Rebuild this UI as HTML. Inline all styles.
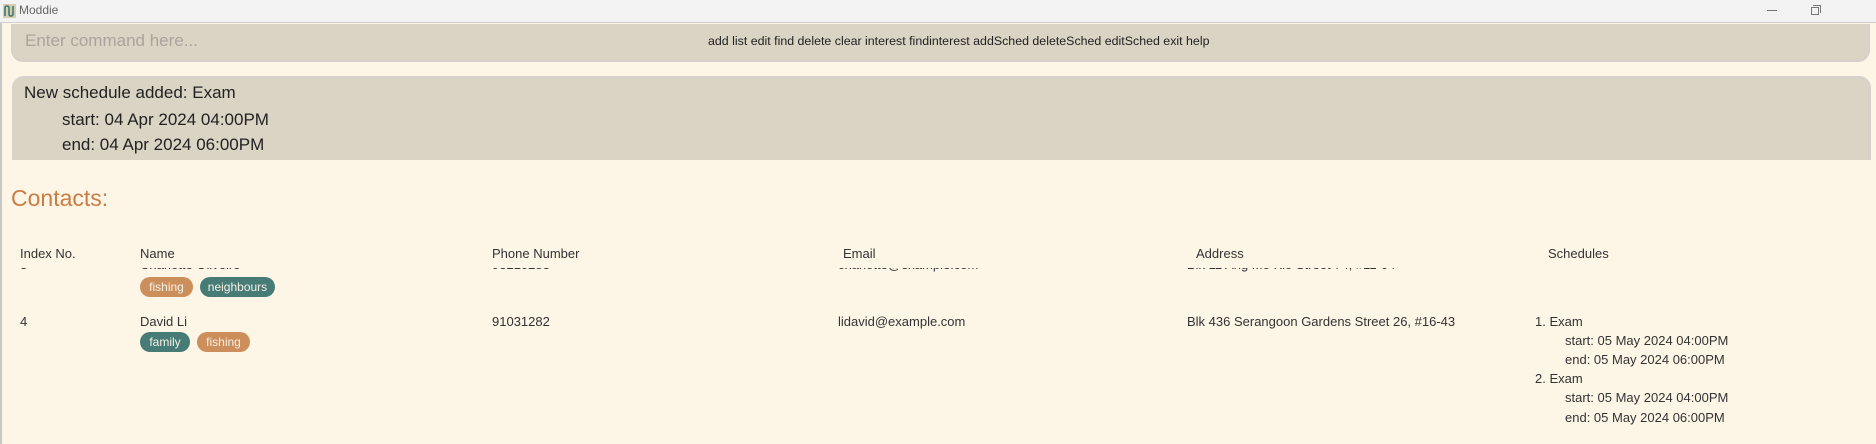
<!DOCTYPE html>
<html><head><meta charset="utf-8"><style>
*{margin:0;padding:0;box-sizing:border-box}
body{width:1876px;height:444px;overflow:hidden;background:#fdf6e6;font-family:"Liberation Sans",sans-serif;color:#333;position:relative}
.a{position:absolute;white-space:nowrap}
.tb{position:absolute;left:0;top:0;width:1876px;height:23px;background:#f3f3f3;border-bottom:1px solid #cfcfcf}
.tag{position:absolute;height:20px;border-radius:10px;color:#f5f0e6;font-size:12px;line-height:20px;text-align:center}
.o{background:#cc8f5c}.t{background:#477c76}
.f{font-size:13px;line-height:16px}
</style></head><body>
<div style="position:absolute;left:0;top:23px;width:2px;height:421px;background:#c8c8c8"></div>
<div class="tb"></div>
<div class="a" style="left:3px;top:4px;width:13px;height:14px;background:#d9ccb0"></div>
<svg class="a" style="left:3px;top:4px" width="13" height="14"><path d="M2 12V4Q2 2 4 2Q6 2 6 4V10Q6 12 8 12Q10 12 10 10V2" stroke="#3b7c74" stroke-width="1.6" fill="none"/></svg>
<div class="a" style="left:19px;top:3px;font-size:12px;color:#666">Moddie</div>
<div class="a" style="left:1767px;top:10px;width:10px;height:1px;background:#777"></div>
<div class="a" style="left:1811px;top:7px;width:8px;height:8px;border:1px solid #777"></div>
<div class="a" style="left:1813px;top:5px;width:8px;height:8px;border-top:1px solid #777;border-right:1px solid #777"></div>
<div class="a" style="left:11px;top:24px;width:1859px;height:38px;background:#dad4c4;border-radius:0 0 12px 12px;border:2px solid #d6d2cb;border-top:none"></div>
<div class="a" style="left:25px;top:31px;font-size:17px;color:#a9a59c">Enter command here...</div>
<div class="a" style="left:708px;top:34px;font-size:12.4px;color:#222">add list edit find delete clear interest findinterest addSched deleteSched editSched exit help</div>
<div class="a" style="left:12px;top:76px;width:1859px;height:84px;background:#dad4c4;border-radius:12px 12px 0 0;border-top:2px solid #d6d2cb;border-right:3px solid #d6d2cb"></div>
<div class="a" style="left:24px;top:83px;font-size:17px;color:#222">New schedule added: Exam</div>
<div class="a" style="left:62px;top:110px;font-size:17px;color:#222">start: 04 Apr 2024 04:00PM</div>
<div class="a" style="left:62px;top:135px;font-size:17px;color:#222">end: 04 Apr 2024 06:00PM</div>
<div class="a" style="left:11px;top:185px;font-size:23px;color:#c97d45">Contacts:</div>
<div class="a f" style="left:20px;top:246px">Index No.</div>
<div class="a f" style="left:140px;top:246px">Name</div>
<div class="a f" style="left:492px;top:246px">Phone Number</div>
<div class="a f" style="left:843px;top:246px">Email</div>
<div class="a f" style="left:1196px;top:246px">Address</div>
<div class="a f" style="left:1548px;top:246px">Schedules</div>
<div style="position:absolute;left:0;top:268px;width:1876px;height:6px;overflow:hidden">
<div class="a f" style="left:20px;top:-11px">3</div>
<div class="a f" style="left:140px;top:-11px">Charlotte Oliveiro</div>
<div class="a f" style="left:492px;top:-11px">93210283</div>
<div class="a f" style="left:838px;top:-11px">charlotte@example.com</div>
<div class="a f" style="left:1187px;top:-11px">Blk 11 Ang Mo Kio Street 74, #11-04</div>
</div>
<div class="tag o" style="left:140px;top:277px;width:53px">fishing</div>
<div class="tag t" style="left:200px;top:277px;width:75px">neighbours</div>
<div class="a f" style="left:20px;top:314px">4</div>
<div class="a f" style="left:140px;top:314px">David Li</div>
<div class="tag t" style="left:140px;top:332px;width:50px">family</div>
<div class="tag o" style="left:197px;top:332px;width:53px">fishing</div>
<div class="a f" style="left:492px;top:314px">91031282</div>
<div class="a f" style="left:838px;top:314px">lidavid@example.com</div>
<div class="a f" style="left:1187px;top:314px">Blk 436 Serangoon Gardens Street 26, #16-43</div>
<div class="a f" style="left:1535px;top:314px">1. Exam</div>
<div class="a f" style="left:1565px;top:333px">start: 05 May 2024 04:00PM</div>
<div class="a f" style="left:1565px;top:352px">end: 05 May 2024 06:00PM</div>
<div class="a f" style="left:1535px;top:371px">2. Exam</div>
<div class="a f" style="left:1565px;top:390px">start: 05 May 2024 04:00PM</div>
<div class="a f" style="left:1565px;top:410px">end: 05 May 2024 06:00PM</div>
</body></html>
